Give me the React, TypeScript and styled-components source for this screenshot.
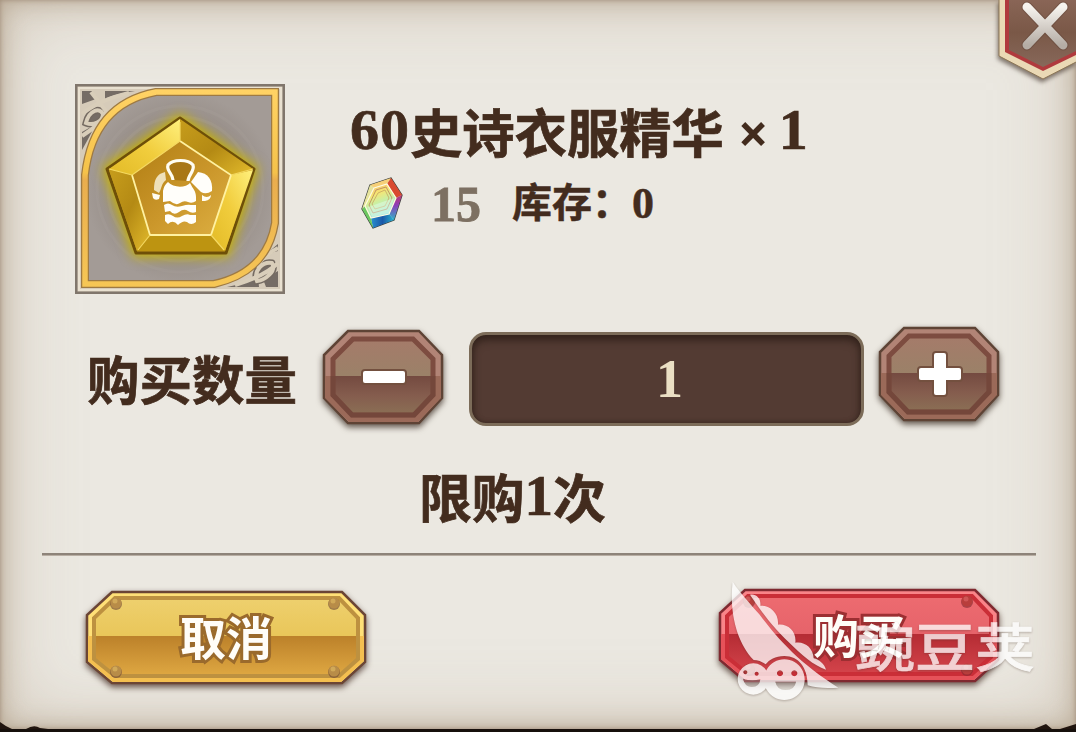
import React, { useState } from "react";
import styled, { createGlobalStyle } from "styled-components";

const GlobalStyle = createGlobalStyle`
    body {
        margin: 0;
        background-color: #17100c;
    }
    * {
        box-sizing: border-box;
    }
`;

const Dialog = styled.div`
    position: relative;
    display: flex;
    flex-direction: column;
    width: 1076px;
    height: 732px;
    padding-top: 84px;
    overflow: hidden;
    color: #432c1e;
    font-family: "Liberation Serif", "Noto Sans CJK SC", serif;
    font-weight: bold;
    background-color: #ebe8e1;
    border-bottom: 3px solid #17100c;
    box-shadow: inset 0 0 5px #a08d79, inset 0 0 26px rgba(172, 153, 130, 0.75), inset 0 0 76px rgba(190, 175, 155, 0.65);
`;

const ItemRow = styled.div`
    display: flex;
    height: 210px;
    padding-left: 75px;
`;

const ItemInfo = styled.div`
    display: flex;
    flex-direction: column;
    padding: 16px 0 0 65px;
`;

const Title = styled.div`
    display: flex;
    align-items: center;
    height: 60px;
    font-size: 52.3px;
    white-space: pre;
    -webkit-text-stroke: 0.7px #432c1e;
`;

const Num = styled.span<{ $size: number; $gap?: number }>`
    font-size: ${p => p.$size}px;
    letter-spacing: ${p => p.$gap || 0}px;
    line-height: 1;
`;

const Times = styled.span`
    width: 51px;
    margin-left: 4px;
    margin-top: 8px;
    font-size: 50px;
    text-align: center;
    line-height: 1;
    -webkit-text-stroke: 2px #432c1e;
`;

const PriceRow = styled.div`
    display: flex;
    align-items: center;
    height: 60px;
    margin-top: 13px;
    padding-left: 10px;
`;

const Price = styled.div`
    width: 84px;
    padding: 2px 0 0 27px;
    font-size: 50px;
    line-height: 1;
    color: #7d7062;
    -webkit-text-stroke: 0.8px #7d7062;
`;

const Stock = styled.div`
    display: flex;
    align-items: center;
    margin-left: 24px;
    padding-top: 2px;
    font-size: 40px;
    line-height: 1;
    -webkit-text-stroke: 0.5px #432c1e;
`;

const AmountRow = styled.div`
    display: flex;
    height: 100px;
    margin-top: 32px;
    padding-left: 87px;
`;

const Label = styled.div`
    width: 235px;
    font-size: 52.5px;
    line-height: 113px;
    -webkit-text-stroke: 0.7px #432c1e;
`;

const StepButton = styled.button<{ $top: number }>`
    width: 122px;
    height: 96px;
    margin-top: ${p => p.$top}px;
    padding: 0;
    border: 0;
    background: none;
    filter: drop-shadow(0 3px 3px rgba(50, 35, 25, 0.75));
`;

const AmountBox = styled.div`
    display: flex;
    align-items: center;
    justify-content: center;
    width: 395px;
    height: 94px;
    margin: 6px 14px 0 25px;
    padding-left: 6px;
    border: 3px solid #7c6c59;
    border-radius: 17px;
    background-color: #533b33;
    box-shadow: inset 0 5px 8px #33231c, inset 0 0 5px #3c2922;
    color: #eadfc4;
    font-size: 54px;
    line-height: 1;
`;

const Limit = styled.div`
    display: flex;
    align-items: center;
    height: 64px;
    margin-top: 37px;
    padding-left: 419px;
    font-size: 52.8px;
    -webkit-text-stroke: 0.7px #432c1e;
`;

const Divider = styled.div`
    height: 3px;
    margin: 26px 40px 0 42px;
    background-color: #8d8379;
    border-bottom: 1px solid #b8aea3;
`;

const Footer = styled.div`
    display: flex;
    justify-content: space-between;
    padding: 34px 76px 0 85px;
`;

const ActionButton = styled.button<{ $stroke: string; $lift: number }>`
    display: grid;
    width: 282px;
    height: 96px;
    margin-top: ${p => -p.$lift}px;
    padding: 0;
    border: 0;
    background: none;
    color: #fffdf8;
    font: bold 46px "Noto Sans CJK SC", sans-serif;
    filter: drop-shadow(0 3px 3px rgba(60, 35, 25, 0.75));

    > * {
        grid-area: 1 / 1;
    }

    > span {
        z-index: 1;
        align-self: center;
        padding-bottom: 6px;
        line-height: 60px;
        -webkit-text-stroke: 6px ${p => p.$stroke};
        paint-order: stroke fill;
    }
`;

const CloseButton = styled.button`
    position: absolute;
    top: 0;
    right: 0;
    width: 80px;
    height: 86px;
    padding: 0;
    border: 0;
    background: none;
    filter: drop-shadow(-1px 3px 2px rgba(60, 45, 35, 0.6));
`;

const TornEdge = styled.svg`
    position: absolute;
    left: 0;
    bottom: 0;
`;

const Watermark = styled.div`
    position: absolute;
    left: 731px;
    top: 581px;
    display: flex;
    opacity: 0.76;
    color: #fff;
    font: 500 60px "Noto Sans CJK SC", sans-serif;
    line-height: 60px;
    white-space: nowrap;
    pointer-events: none;
    filter: drop-shadow(0 1px 1px rgba(70, 50, 40, 0.4));
`;

const WatermarkText = styled.span`
    margin: 33px 0 0 14px;
    height: 60px;
    transform: scaleY(0.87);
    -webkit-text-stroke: 0.8px #fff;
`;

const ItemIcon = () => (
    <svg width="210" height="210" viewBox="0 0 210 210">
        <defs>
            <radialGradient id="slate">
                <stop offset="0" stopColor="#8f867e" />
                <stop offset="0.65" stopColor="#958c86" />
                <stop offset="1" stopColor="#a39b96" />
            </radialGradient>
            <linearGradient id="frame" x1="0" y1="0" x2="0" y2="1">
                <stop offset="0" stopColor="#ffd264" />
                <stop offset="0.42" stopColor="#f5c24a" />
                <stop offset="0.46" stopColor="#e9ad4e" />
                <stop offset="1" stopColor="#f6c655" />
            </linearGradient>
            <linearGradient id="face" x1="0" y1="0" x2="1" y2="1">
                <stop offset="0" stopColor="#b07d12" />
                <stop offset="0.55" stopColor="#cb972b" />
                <stop offset="1" stopColor="#ddb043" />
            </linearGradient>
            <linearGradient id="facetLight" x1="0" y1="1" x2="1" y2="0">
                <stop offset="0" stopColor="#e2ba26" />
                <stop offset="0.5" stopColor="#f1cd3d" />
                <stop offset="1" stopColor="#fff07d" />
            </linearGradient>
            <linearGradient id="facetDark" x1="0" y1="0" x2="1" y2="1">
                <stop offset="0" stopColor="#c79d1c" />
                <stop offset="0.5" stopColor="#b48a14" />
                <stop offset="1" stopColor="#e3bb2c" />
            </linearGradient>
            <filter id="glow" x="-30%" y="-30%" width="160%" height="160%">
                <feGaussianBlur stdDeviation="6" />
            </filter>
        </defs>
        <rect x="1" y="1" width="208" height="208" fill="#d6cbb9" stroke="#80766c" strokeWidth="3" />
        <rect x="4" y="4" width="202" height="202" fill="none" stroke="#e9e1d1" strokeWidth="2" />
        {/* corner filigree */}
        <g fill="#756c65">
            <path d="M7 7h10l4 8L7 20zM30 7h30C47 9 38 11 30 15zM7 48l14-8-9 17-5 9z" />
            <path d="M203 203h-12l-3-8 15-8zM184 203h-32c14-3 22-6 31-10zM203 160l-12 10 12-3z" />
        </g>
        <g fill="#756c65" stroke="#746a61" strokeWidth="7">
            <path d="M11 39C14 26 25 23 28 30 28 38 18 42 11 39Z" />
            <path d="M182 197C178 187 188 177 197 179 202 187 190 196 182 197Z" />
        </g>
        <g fill="none" stroke="#d9ceba" strokeWidth="4">
            <path d="M11 39C14 26 25 23 28 30 28 38 18 42 11 39ZM7 30Q24 16 54 9M7 52Q22 42 30 34M16 8L31 27Q32 33 25 37" />
            <path d="M182 197C178 187 188 177 197 179 202 187 190 196 182 197ZM203 179Q190 192 160 201M203 164Q190 170 181 183" />
        </g>
        <path d="M81 8H200V139Q192 188 139 200H10V91Q18 20 81 8Z" fill="url(#slate)" stroke="#9e7a43" strokeWidth="8" />
        <path d="M81 8H200V139Q192 188 139 200H10V91Q18 20 81 8Z" fill="none" stroke="url(#frame)" strokeWidth="5.5" />
        <g fill="none" stroke="#aaa29b" strokeWidth="3" opacity="0.3">
            <circle cx="105" cy="105" r="83" />
            <circle cx="105" cy="105" r="72" />
        </g>
        <path d="M105 34L179 85 151 169H61L32 85Z" fill="#c9b300" stroke="#c9b300" strokeWidth="8" filter="url(#glow)" />
        <path d="M105 34L179 85 151 169H61L32 85Z" fill="#c59918" stroke="#6e4f08" strokeWidth="3" strokeLinejoin="round" />
        <path d="M105 35V57L57 91 34 85Z" fill="url(#facetLight)" />
        <path d="M105 35V57L156 91 178 85Z" fill="url(#facetDark)" />
        <path d="M34 86L57 91 75 151 62 167Z" fill="url(#facetDark)" />
        <path d="M178 86L156 91 136 151 150 167Z" fill="url(#facetLight)" />
        <path d="M75 151H136L150 167H62Z" fill="#bd9411" />
        <path d="M105 57L156 91 136 151H75L57 91Z" fill="url(#face)" />
        <path d="M57 91L75 151H136L156 91 105 57" fill="none" stroke="#fff1a0" strokeWidth="1.8" />
        <path d="M57 91L105 57M34 85L57 91M178 85L156 91M105 57V38M75 151L63 166M136 151L149 166" fill="none" stroke="#f5d961" strokeWidth="1.2" />
        {/* armour */}
        <path d="M98 96C98 90 91 87 93 81 98 75 113 75 118 81 120 87 113 91 113 97" fill="#a97716" stroke="#fffdf3" strokeWidth="3.2" />
        <path d="M90 88L91 96C86 100 87 104 84 109L79 106C79 95 82 90 90 88Z" fill="#eee0ba" />
        <path d="M123 88C133 89 138 96 137 107Q131 111 126 108L116 98Z" fill="#fffefa" />
        <path d="M77 109L85 111 84 115Q80 117 78 114ZM127 111Q132 115 136 111 136 116 130 117H127Z" fill="#fffdf3" />
        <path d="M93 98C98 104 111 104 115 99 118 105 121 107 121 113V117Q117 120 113 118T105 119 95 117L88 118V107Q89 101 93 98Z" fill="#fffefa" />
        <path d="M89 121Q93 118 97 121T107 122 116 121L121 121V128Q117 130 113 127T104 128 95 127L90 128Z" fill="#fffefa" />
        <path d="M90 131Q94 129 98 132T107 132 115 131L121 131V138Q116 142 112 138 108 136 103 141 98 135 93 140L90 137Z" fill="#fffefa" />
    </svg>
);

const GemIcon = () => (
    <svg width="44" height="54" viewBox="0 0 44 54">
        <defs>
            <linearGradient id="gemFace" x1="0.2" y1="0" x2="0.6" y2="1">
                <stop offset="0" stopColor="#f7b06c" />
                <stop offset="0.3" stopColor="#f6e673" />
                <stop offset="0.55" stopColor="#c9efa4" />
                <stop offset="1" stopColor="#98e6ee" />
            </linearGradient>
            <linearGradient id="gemBase" x1="0" y1="0" x2="1" y2="0">
                <stop offset="0" stopColor="#2a8fd0" />
                <stop offset="0.5" stopColor="#1a58a8" />
                <stop offset="1" stopColor="#29b3cf" />
            </linearGradient>
            <linearGradient id="gemSide" x1="0" y1="0" x2="0" y2="1">
                <stop offset="0" stopColor="#c03a6c" />
                <stop offset="0.4" stopColor="#8e3cb8" />
                <stop offset="1" stopColor="#2fb2c8" />
            </linearGradient>
        </defs>
        <path d="M10 9L31 2 42 19 34 44 13 52 2 33Z" fill="#cdeedb" stroke="#3c403c" strokeWidth="1.3" />
        <path d="M10 9L31 2 27 8 14 12Z" fill="#f6cf78" />
        <path d="M31 2L42 19 36 22 27 8Z" fill="#d9492f" />
        <path d="M42 19L34 44 29 38 36 22Z" fill="url(#gemSide)" />
        <path d="M34 44L13 52 11 42 29 38Z" fill="url(#gemBase)" />
        <path d="M13 52L2 33 5 30 11 42Z" fill="#6cc760" />
        <path d="M10 9L2 33 5 30 14 12Z" fill="#e6e39c" />
        <path d="M14 12L27 8 36 22 29 38 11 42 5 30Z" fill="url(#gemFace)" stroke="#fffbe0" strokeWidth="1.2" />
        <path d="M16 14L26 11 32 22 27 33 13 37 9 29Z" fill="none" stroke="#b5825c" strokeWidth="0.8" />
        <path d="M18 17L25 14 29 22 25 30 15 33 12 28Z" fill="none" stroke="#c5a463" strokeWidth="0.8" />
        <path d="M8 31L34 22 29 37 12 41Z" fill="#effff0" opacity="0.4" />
    </svg>
);

const StepIcon = ({ plus }: { plus?: boolean }) => {
    const id = plus ? "plus" : "minus";
    return (
        <svg width="122" height="96" viewBox="0 0 122 96">
            <defs>
                <linearGradient id={id} x1="0" y1="0" x2="0" y2="1">
                    <stop offset="0" stopColor="#a57b6a" />
                    <stop offset="0.485" stopColor="#9b8168" />
                    <stop offset="0.485" stopColor="#744a40" />
                    <stop offset="0.75" stopColor="#855d4e" />
                    <stop offset="1" stopColor="#8b7055" />
                </linearGradient>
            </defs>
            <path d="M26 2H97L120 26V69L97 94H26L2 69V26Z" fill="#b28476" stroke="#5e4335" strokeWidth="2.5" />
            <path d="M3 47H119V69L96 93H27L3 69Z" fill="#9b6a59" />
            <path d="M31 10H91L111 30V66L92 86H30L11 66V30Z" fill={`url(#${id})`} stroke="#7d4c40" strokeWidth="5" />
            {/* lower half of the rim sits in shade */}
            <path d="M11 47V66L30 86H92L111 66V47" fill="none" stroke="#6c4136" strokeWidth="5" opacity="0.5" />
            <g fill="#fff" stroke="#73503f" strokeWidth="4" paintOrder="stroke">
                {plus
                    ? <path d="M57 27H66Q68 27 68 29V42H81Q83 42 83 44V52Q83 54 81 54H68V67Q68 69 66 69H58Q56 69 56 67V54H43Q41 54 41 52V44Q41 42 43 42H56V29Q56 27 58 27Z" />
                    : <rect x="41" y="42" width="42" height="12" rx="2" />}
            </g>
        </svg>
    );
};

const palettes = {
    gold: { top: "#eed06e", topEnd: "#e9c659", low: "#bc812a", lowEnd: "#dfa842", edge: "#ffe077", edgeLow: "#f4bf50", line: "#bd9140", rim: "#6b4535", rivet: "#b88c48" },
    red: { top: "#ed6b70", topEnd: "#e6636a", low: "#b52c34", lowEnd: "#d4444b", edge: "#f98488", edgeLow: "#e65259", line: "#ca2e37", rim: "#7f2930", rivet: "#b83e3c" },
};

const Plate = ({ tone }: { tone: "gold" | "red" }) => {
    const c = palettes[tone];
    return (
        <svg width="282" height="96" viewBox="0 0 282 96">
            <defs>
                <linearGradient id={tone} x1="0" y1="0" x2="0" y2="1">
                    <stop offset="0" stopColor={c.top} />
                    <stop offset="0.49" stopColor={c.topEnd} />
                    <stop offset="0.49" stopColor={c.low} />
                    <stop offset="1" stopColor={c.lowEnd} />
                </linearGradient>
            </defs>
            <path d="M27 2H257L280 25V72L257 93H27L2 72V25Z" fill={c.edge} stroke={c.rim} strokeWidth="2.5" />
            <path d="M3 46H279V71L256 92H28L3 71Z" fill={c.edgeLow} />
            <path d="M30 8H254L273 28V69L254 86H30L9 69V28Z" fill={`url(#${tone})`} stroke={c.line} strokeWidth="4" />
            {[[31, 13], [249, 13], [31, 81], [249, 81]].map(([x, y]) => (
                <g key={`${x}-${y}`}>
                    <circle cx={x} cy={y + 1} r="6" fill={c.rim} opacity="0.6" />
                    <circle cx={x} cy={y} r="5.5" fill={c.rivet} />
                    <circle cx={x - 1} cy={y - 2} r="2.5" fill={c.edge} opacity="0.35" />
                </g>
            ))}
        </svg>
    );
};

const CloseIcon = () => (
    <svg width="80" height="86" viewBox="0 0 80 86">
        <defs>
            <linearGradient id="cross" x1="0" y1="0" x2="0" y2="1">
                <stop offset="0" stopColor="#f6f3ee" />
                <stop offset="1" stopColor="#b5ada5" />
            </linearGradient>
            <linearGradient id="leather" x1="0" y1="0" x2="0" y2="1">
                <stop offset="0" stopColor="#8a6657" />
                <stop offset="0.5" stopColor="#7a5847" />
                <stop offset="1" stopColor="#87685a" />
            </linearGradient>
        </defs>
        <path d="M3 -2V56L47 79 84 60V-2Z" fill="#ead9b5" stroke="#8c7656" strokeWidth="1" />
        <path d="M9 -2V52L47 71 84 53V-2Z" fill="#b03a3d" />
        <path d="M13 -2V50L47 67 84 49V-2Z" fill="url(#leather)" />
        <path d="M31 7L67 45M67 7L31 45" fill="none" stroke="#563d31" strokeWidth="11" strokeLinecap="round" opacity="0.35" />
        <path d="M31 7L67 45M67 7L31 45" fill="none" stroke="url(#cross)" strokeWidth="9" strokeLinecap="round" />
    </svg>
);

const PodLogo = () => (
    <svg width="110" height="120" viewBox="90 50 330 360" fill="#fff">
        <path d="M95 52C120 90 150 120 175 150 235 230 300 300 412 370 375 373 345 371 320 363 320 310 293 275 250 275 222 275 205 286 194 300 182 291 170 287 158 287 108 235 84 145 95 52Z" />
        <path d="M147 91C165 87 181 102 178 124 208 122 234 147 231 181 262 178 287 202 283 235 310 230 337 250 338 282 355 285 371 301 375 316 338 303 300 270 265 235 215 190 180 140 147 91Z" />
        <path fillRule="evenodd" d="M157 297a47 47 0 1 0 .1 0ZM133 318a6 6 0 1 1-.1 0ZM167 322a6 6 0 1 1-.1 0ZM126 343Q150 351 178 345 175 369 151 368 131 366 126 343Z" />
        <path fillRule="evenodd" d="M250 285a61 61 0 1 0 .1 0ZM237 318a9 9 0 1 1-.1 0ZM280 318a9 9 0 1 1-.1 0ZM223 352H285Q281 377 254 377 228 377 223 352Z" />
        <path d="M126 343Q150 351 178 345 175 369 151 368 131 366 126 343ZM223 352H285Q281 377 254 377 228 377 223 352Z" opacity="0.3" />
    </svg>
);

const App = () => {
    const [amount, setAmount] = useState<number>(1);

    return <Dialog>
        <GlobalStyle />
        <ItemRow>
            <ItemIcon />
            <ItemInfo>
                <Title>
                    <Num $size={58} $gap={1}>60</Num>史诗衣服精华<Times>×</Times>
                    <Num $size={58}>1</Num>
                </Title>
                <PriceRow>
                    <GemIcon />
                    <Price>15</Price>
                    <Stock>库存：<Num $size={44}>0</Num></Stock>
                </PriceRow>
            </ItemInfo>
        </ItemRow>
        <AmountRow>
            <Label>购买数量</Label>
            <StepButton $top={3} aria-label="minus" onClick={() => setAmount(Math.max(1, amount - 1))}>
                <StepIcon />
            </StepButton>
            <AmountBox>{amount}</AmountBox>
            <StepButton $top={0} aria-label="plus" onClick={() => setAmount(amount + 1)}>
                <StepIcon plus />
            </StepButton>
        </AmountRow>
        <Limit>限购<Num $size={57}>1</Num>次</Limit>
        <Divider />
        <Footer>
            <ActionButton $stroke="#9a6a2c" $lift={0}>
                <Plate tone="gold" />
                <span>取消</span>
            </ActionButton>
            <ActionButton $stroke="#9c2f32" $lift={2}>
                <Plate tone="red" />
                <span>购买</span>
            </ActionButton>
        </Footer>
        <TornEdge width="1076" height="8" viewBox="0 0 1076 8" fill="#21150f">
            <path d="M0 1Q5 5 12 8H0ZM26 8Q34 3 40 7L48 8ZM1034 8L1046 3 1052 8ZM1060 8L1076 3V8Z" />
        </TornEdge>
        <CloseButton aria-label="close">
            <CloseIcon />
        </CloseButton>
        <Watermark>
            <PodLogo />
            <WatermarkText>豌豆荚</WatermarkText>
        </Watermark>
    </Dialog>
};

export default App;
